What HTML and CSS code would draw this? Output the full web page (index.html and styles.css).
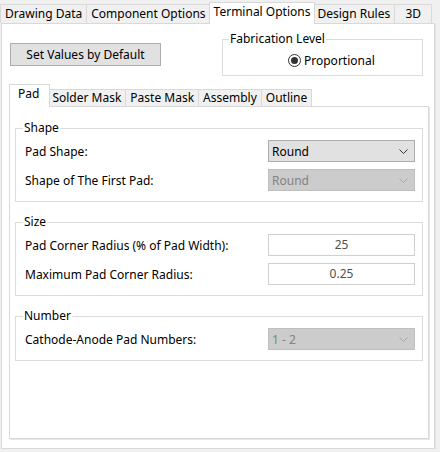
FILE: index.html
```html
<!DOCTYPE html>
<html lang="en">
<head>
  <meta charset="UTF-8">
  <title>Terminal Options</title>
  <link rel="stylesheet" href="styles.css">
</head>
<body>
  <div class="tabstrip outer">
    <div class="tab">Drawing Data</div>
    <div class="tab">Component Options</div>
    <div class="tab active">Terminal Options</div>
    <div class="tab">Design Rules</div>
    <div class="tab tab-3d">3D</div>
  </div>

  <div class="panel">
    <div class="top-row">
      <button class="btn">Set Values by Default</button>
      <fieldset class="group fab">
        <legend>Fabrication Level</legend>
        <label class="radio"><span class="radio-mark"></span>Proportional</label>
      </fieldset>
    </div>

    <div class="tabstrip inner">
      <div class="tab active">Pad</div>
      <div class="tab">Solder Mask</div>
      <div class="tab">Paste Mask</div>
      <div class="tab">Assembly</div>
      <div class="tab">Outline</div>
    </div>

    <div class="subpanel">
      <fieldset class="group">
        <legend>Shape</legend>
        <div class="row">
          <span class="label">Pad Shape:</span>
          <div class="select">
            <span>Round</span>
            <svg width="9" height="5" viewBox="0 0 9 5"><polyline points="0.5,0.5 4.5,4.5 8.5,0.5" fill="none" stroke="currentColor" stroke-width="1"/></svg>
          </div>
        </div>
        <div class="row">
          <span class="label">Shape of The First Pad:</span>
          <div class="select disabled">
            <span>Round</span>
            <svg width="9" height="5" viewBox="0 0 9 5"><polyline points="0.5,0.5 4.5,4.5 8.5,0.5" fill="none" stroke="currentColor" stroke-width="1"/></svg>
          </div>
        </div>
      </fieldset>

      <fieldset class="group">
        <legend>Size</legend>
        <div class="row">
          <span class="label">Pad Corner Radius (% of Pad Width):</span>
          <div class="textbox">25</div>
        </div>
        <div class="row">
          <span class="label">Maximum Pad Corner Radius:</span>
          <div class="textbox">0.25</div>
        </div>
      </fieldset>

      <fieldset class="group">
        <legend>Number</legend>
        <div class="row">
          <span class="label">Cathode-Anode Pad Numbers:</span>
          <div class="select disabled">
            <span>1 - 2</span>
            <svg width="9" height="5" viewBox="0 0 9 5"><polyline points="0.5,0.5 4.5,4.5 8.5,0.5" fill="none" stroke="currentColor" stroke-width="1"/></svg>
          </div>
        </div>
      </fieldset>
    </div>
  </div>
</body>
</html>
```

FILE: styles.css
```css
body {
  margin: 0;
  padding: 2px 0 0 0;
  background-color: #f0f0f0;
  font-family: 'Noto Sans', 'Open Sans', sans-serif;
  font-size: 12px;
  color: #000;
}

/* tabs */
.tabstrip {
  display: flex;
  align-items: flex-end;
  position: relative;
  z-index: 1;
}

.tabstrip.outer {
  height: 21px;
  margin-left: 1px;
}

.tabstrip.inner {
  height: 22px;
  margin-left: 7px;
}

.tab {
  box-sizing: border-box;
  height: 19px;
  padding: 0 4px;
  margin-left: -1px;
  border: 1px solid #d9d9d9;
  border-bottom: none;
  background-color: #f0f0f0;
  line-height: 17px;
  white-space: nowrap;
}

.tabstrip.inner .tab {
  height: 17px;
  line-height: 15px;
  padding: 0 4px;
}

.tab.active,
.tabstrip.inner .tab.active {
  height: 22px;
  line-height: 18px;
  margin: 0 -2px -1px -2px;
  background-color: #fff;
  z-index: 2;
  position: relative;
}

.tabstrip.inner .tab.active {
  height: 23px;
  margin-left: 0;
  padding: 0 10px 0 8px;
}

.tab-3d {
  min-width: 38px;
  text-align: center;
}

/* panels */
.panel {
  box-sizing: border-box;
  width: 434px;
  height: 426px;
  margin-left: 1px;
  border: 1px solid #d9d9d9;
  background-color: #fff;
  box-shadow: 1px 1px 0 #e3e3e3;
}

.top-row {
  display: flex;
  align-items: flex-start;
  padding: 8px 11px 0 8px;
  margin-bottom: 8px;
}

.btn {
  box-sizing: border-box;
  width: 151px;
  height: 23px;
  margin-top: 11px;
  padding: 0;
  border: 1px solid #adadad;
  background-color: #e1e1e1;
  font: inherit;
  color: #000;
}

.subpanel {
  box-sizing: border-box;
  width: 420px;
  height: 333px;
  margin-left: 7px;
  padding-top: 14px;
  border: 1px solid #d9d9d9;
  background-color: #fff;
  box-shadow: 1px 1px 0 #e6e6e6;
}

/* group boxes */
.group {
  margin: 0 5px 13px 5px;
  padding: 5px 7px 10px 9px;
  border: 1px solid #dcdcdc;
  min-width: 0;
}

.group legend {
  padding: 0 1px;
  margin-left: -2px;
  line-height: 14px;
}

.fab {
  width: 201px;
  box-sizing: border-box;
  margin: 0 0 0 auto;
  padding: 7px 0 8px 65px;
}

.fab legend {
  margin-left: -59px;
}

.radio {
  display: flex;
  align-items: center;
  height: 14px;
}

.radio-mark {
  box-sizing: border-box;
  width: 13px;
  height: 13px;
  margin-right: 3px;
  border: 1px solid #333;
  border-radius: 50%;
  display: flex;
  align-items: center;
  justify-content: center;
}

.radio-mark::after {
  content: "";
  width: 7px;
  height: 7px;
  border-radius: 50%;
  background-color: #333;
}

/* rows */
.row {
  display: flex;
  align-items: center;
  justify-content: space-between;
}

.row + .row {
  margin-top: 7px;
}

.select,
.textbox {
  box-sizing: border-box;
  width: 147px;
  height: 22px;
  border: 1px solid #adadad;
  background-color: #e1e1e1;
}

.select {
  display: flex;
  align-items: center;
  justify-content: space-between;
  padding: 0 6px 0 3px;
  color: #000;
}

.select svg {
  color: #333;
}

.select.disabled {
  border-color: #bfbfbf;
  background-color: #cccccc;
  color: #838383;
}

.select.disabled svg {
  color: #a6a6a6;
}

.textbox {
  border-color: #d0d0d0;
  background-color: #fff;
  color: #505050;
  text-align: center;
  line-height: 20px;
}
```
